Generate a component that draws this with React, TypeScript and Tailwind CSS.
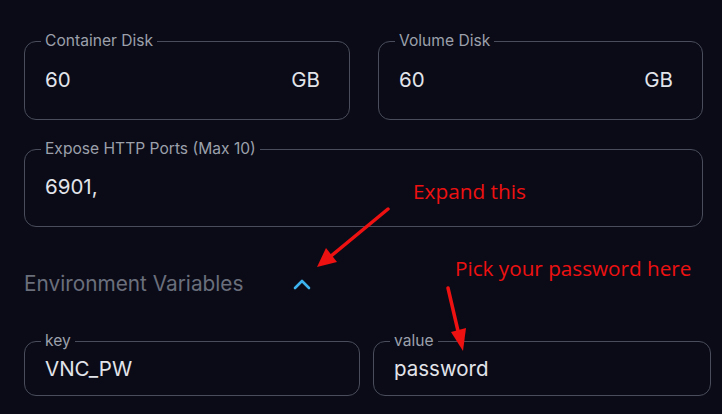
import React from "react";

function Field({
  label,
  value,
  unit,
  width,
  innerH,
  pb,
}: {
  label: string;
  value: string;
  unit?: string;
  width: string;
  innerH: string;
  pb: string;
}) {
  return (
    <fieldset className={`border border-[#4a4d5b] rounded-xl px-4 m-0 min-w-0 ${width} ${pb}`}>
      <legend className="px-1 text-[15.6px] leading-[18px] text-[#9ca0ab]">{label}</legend>
      <div className={`flex items-center justify-between pl-1 pr-[13px] ${innerH} text-[20.5px] text-[#e2e4ea]`}>
        <span>{value}</span>
        {unit && <span>{unit}</span>}
      </div>
    </fieldset>
  );
}

export default function App() {
  return (
    <div
      className="relative w-[722px] h-[414px] bg-[#0a0b17] overflow-hidden"
      style={{ fontFamily: "Inter, 'Liberation Sans', sans-serif" }}
    >
      <div className="flex flex-col pl-6 pt-[32px]">
        <div className="flex gap-[28px]">
          <Field label="Container Disk" value="60" unit="GB" width="w-[326px]" innerH="h-[60px]" pb="pb-[9px]" />
          <Field label="Volume Disk" value="60" unit="GB" width="w-[325px]" innerH="h-[60px]" pb="pb-[9px]" />
        </div>
        <div className="mt-[20px]">
          <Field label="Expose HTTP Ports (Max 10)" value="6901," width="w-[679px]" innerH="h-[58px]" pb="pb-[10px]" />
        </div>
        <div className="mt-[43px] flex items-center h-[28px]">
          <span className="text-[20.8px] text-[#6b6f7c]">Environment Variables</span>
          <svg className="ml-[50px]" width="18" height="12" viewBox="0 0 18 12" fill="none">
            <path d="M2 10 L9 3 L16 10" stroke="#3db4ef" strokeWidth="2.6" strokeLinecap="round" strokeLinejoin="round" />
          </svg>
        </div>
        <div className="mt-[34px] flex gap-[13px]">
          <Field label="key" value="VNC_PW" width="w-[336px]" innerH="h-[38px]" pb="pb-[7px]" />
          <Field label="value" value="password" width="w-[338px]" innerH="h-[38px]" pb="pb-[7px]" />
        </div>
      </div>

      <span
        className="absolute left-[413px] top-[177px] text-[20.8px] leading-[28px] text-[#ee1111]"
        style={{ fontFamily: "'Open Sans', sans-serif" }}
      >
        Expand this
      </span>
      <span
        className="absolute left-[455px] top-[254px] text-[20.7px] leading-[28px] text-[#ee1111]"
        style={{ fontFamily: "'Open Sans', sans-serif" }}
      >
        Pick your password here
      </span>
      <svg className="absolute inset-0 pointer-events-none" width="722" height="414" viewBox="0 0 722 414">
        <line x1="388" y1="209" x2="331" y2="256" stroke="#ee1111" strokeWidth="3.5" strokeLinecap="round" />
        <polygon points="317,267 337,262 326,248" fill="#ee1111" />
        <line x1="448" y1="288" x2="458" y2="331" stroke="#ee1111" strokeWidth="3.5" strokeLinecap="round" />
        <polygon points="463,351 466,328 451,332" fill="#ee1111" />
      </svg>
    </div>
  );
}
